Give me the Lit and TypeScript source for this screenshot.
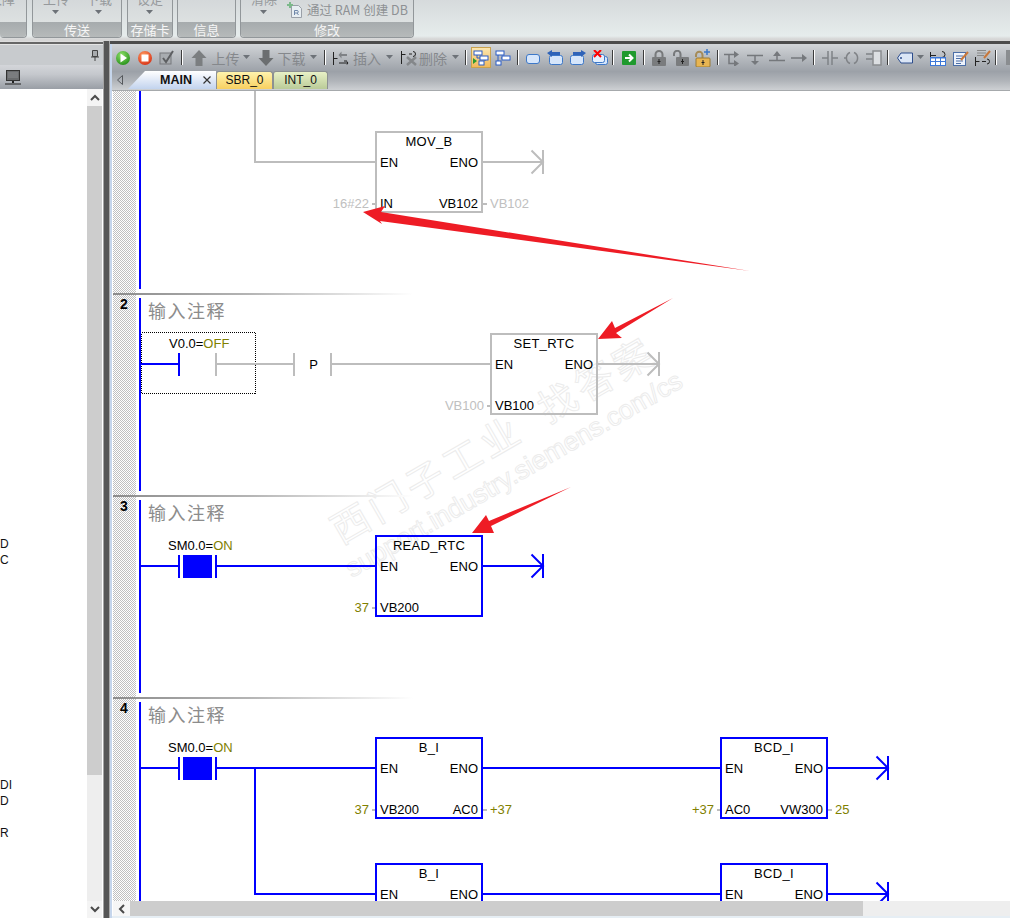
import { LitElement, html, css, svg } from "lit";
import { customElement } from "lit/decorators.js";

const BLUE = "#0000ff";
const GRAY = "#bdbdbd";
const OLIVE = "#808000";
const LABEL = "#c0c0c0";

const ico = (w: number, h: number, body: unknown) =>
  html`<svg width=${w} height=${h} viewBox="0 0 ${w} ${h}">${body}</svg>`;

const caretIcon = ico(8, 5, svg`<path d="M0 0h7L3.5 4z" fill="#6d7278"/>`);

const contactGlyph = svg`<g stroke="#222" stroke-width="1" fill="none"><path d="M0.5 2v7M6 5.500h-5M0.500 13v-1h4M12 1.500a2 2 0 0 1 0 6"/></g>`;

type Item = { w: number; c?: unknown; cls?: string };

const items: Item[] = [
  { w: 22, c: ico(16, 16, svg`<defs><radialGradient id="gg" cx=".4" cy=".3" r=".8"><stop offset="0" stop-color="#8fe06a"/><stop offset="1" stop-color="#1d8a12"/></radialGradient></defs><circle cx="8" cy="8" r="7" fill="url(#gg)"/><path d="M5.500 3.500l6.500 4.500-6.500 4.500z" fill="#fff"/>`) },
  { w: 22, c: ico(16, 16, svg`<defs><radialGradient id="rg" cx=".4" cy=".3" r=".8"><stop offset="0" stop-color="#ff9a60"/><stop offset="1" stop-color="#d52a10"/></radialGradient></defs><circle cx="8" cy="8" r="7" fill="url(#rg)"/><rect x="4.500" y="4.500" width="7" height="7" fill="#fff"/>`) },
  { w: 21, c: ico(16, 16, svg`<rect x="1" y="3" width="11" height="11" fill="#a8acb0" stroke="#77797c"/><path d="M4 8l3 4 7-11" fill="none" stroke="#5d5f62" stroke-width="2"/>`) },
  { w: 10, cls: "sep" },
  { w: 24, c: ico(16, 16, svg`<path d="M8 0l7.500 8H11.500v8H4.500V8H.5z" fill="#7b7e80"/>`) },
  { w: 29, c: "上传", cls: "tx" },
  { w: 14, c: caretIcon },
  { w: 23, c: ico(16, 16, svg`<path d="M8 16l7.500-8H11.500V0H4.500v8H.5z" fill="#6b6e70"/>`) },
  { w: 29, c: "下载", cls: "tx" },
  { w: 15, c: caretIcon },
  { w: 8, cls: "sep" },
  { w: 24, c: ico(16, 16, svg`<g fill="none" stroke="#222"><path d="M.5 2v13M.5 8.500h4M6 13h9M11 11h3M14 11.500a2 2 0 0 1 0 3"/></g><path d="M14 4H8.500V1.500L5.500 5l3 3.500V6H14z" fill="#7f8286"/>`) },
  { w: 28, c: "插入", cls: "tx" },
  { w: 18, c: caretIcon },
  { w: 19, c: ico(16, 16, svg`<g fill="none" stroke="#222"><path d="M.5 1v13M.5 4.500h4M8 4h3M12 1.500a2 2 0 0 1 0 5"/></g><path d="M6 7l9 8M15 7l-9 8" stroke="#84878a" stroke-width="2.500"/>`) },
  { w: 30, c: "删除", cls: "tx" },
  { w: 15, c: caretIcon },
  { w: 5, cls: "sep" },
  { w: 25, cls: "active", c: ico(16, 16, svg`<rect x="1" y="1" width="8" height="4" fill="#fff" stroke="#2a5cc6"/><rect x="7" y="6" width="8" height="4" fill="#fff" stroke="#2a5cc6"/><rect x="6" y="11" width="5" height="4" fill="#fff" stroke="#2a5cc6"/><path d="M0 8l4 3-4 3z" fill="#2a9a30"/><path d="M4 5v3h3M12 10v1" stroke="#2a5cc6" fill="none"/>`) },
  { w: 20, c: ico(16, 16, svg`<rect x="1" y="1" width="8" height="4" fill="#fff" stroke="#2a5cc6"/><rect x="7" y="6" width="8" height="4" fill="#fff" stroke="#2a5cc6"/><rect x="1" y="11" width="5" height="4" fill="#fff" stroke="#2a5cc6"/><path d="M3 5v6M6 8h1" stroke="#2a5cc6" fill="none"/>`) },
  { w: 10, cls: "sep" },
  { w: 20, c: ico(16, 16, svg`<rect x="1.500" y="4.500" width="13" height="9" rx="2.500" fill="#d6e6fb" stroke="#3d78c8"/>`) },
  { w: 23, c: ico(16, 16, svg`<rect x="2.500" y="5.500" width="13" height="9" rx="2" fill="#d6e6fb" stroke="#3d78c8"/><path d="M0 3l5-3v2h8v3H5v2z" fill="#2f63b8"/>`) },
  { w: 23, c: ico(16, 16, svg`<rect x=".5" y="5.500" width="13" height="9" rx="2" fill="#d6e6fb" stroke="#3d78c8"/><path d="M16 3l-5-3v2H3v3h8v2z" fill="#2f63b8"/>`) },
  { w: 21, c: ico(16, 16, svg`<rect x="3.500" y="6.500" width="12" height="8" rx="2" fill="#d6e6fb" stroke="#3d78c8"/><rect x=".5" y="4.500" width="12" height="8" rx="2" fill="#e6f0fd" stroke="#3d78c8"/><path d="M2 0l7 7M9 0L2 7" stroke="#f00" stroke-width="2"/>`) },
  { w: 6, cls: "sep" },
  { w: 26, c: ico(14, 14, svg`<rect width="14" height="14" rx="1" fill="#1f9a2e"/><path d="M3 7h7M7 3.500L10.500 7 7 10.500" fill="none" stroke="#fff" stroke-width="2"/>`) },
  { w: 4, cls: "sep" },
  { w: 26, c: ico(14, 16, svg`<path d="M3.500 7V4.500a3.500 3.500 0 0 1 7 0V7" fill="none" stroke="#77797b" stroke-width="2"/><rect y="7" width="14" height="9" rx="1" fill="#7a7c7e"/><path d="M7 9v5M5.500 11.500h3" stroke="#222"/>`) },
  { w: 18, c: ico(16, 16, svg`<path d="M1 6V4a3.200 3.200 0 0 1 6.500 0v3" fill="none" stroke="#77797b" stroke-width="2"/><rect x="3" y="7" width="13" height="9" rx="1" fill="#7a7c7e"/><path d="M9.500 9v5M8 11.500h3" stroke="#222"/>`) },
  { w: 26, c: ico(16, 18, svg`<path d="M1 8V6a3.200 3.200 0 0 1 6.500 0v3" fill="none" stroke="#a58b58" stroke-width="2"/><rect x="1" y="9" width="14" height="9" rx="1" fill="#e8b552" stroke="#9a7a35"/><path d="M8 11v5M6.500 13.500h3" stroke="#222"/><path d="M12 0v6M9 3h6" stroke="#3d78c8" stroke-width="1.500"/>`) },
  { w: 4, cls: "sep" },
  { w: 24, c: ico(16, 16, svg`<path d="M0 4.500h5v9h8M5 4.500h7" fill="none" stroke="#75787c" stroke-width="1.500"/><path d="M10 1l5 3.500-5 3.500zM10 10l5 3.500-5 3.500z" fill="#75787c"/>`) },
  { w: 21, c: ico(16, 16, svg`<path d="M0 5.500h16M8 6v5" stroke="#75787c" stroke-width="1.500"/><path d="M4 11h8l-4 4z" fill="#75787c"/>`) },
  { w: 23, c: ico(16, 16, svg`<path d="M0 10.500h16M8 10V5" stroke="#75787c" stroke-width="1.500"/><path d="M4 6h8L8 1z" fill="#75787c"/>`) },
  { w: 22, c: ico(16, 16, svg`<path d="M0 8h12" stroke="#75787c" stroke-width="1.500"/><path d="M11 4l5 4-5 4z" fill="#75787c"/>`) },
  { w: 8, cls: "sep" },
  { w: 23, c: ico(16, 16, svg`<path d="M0 8h6M6 1v14M10 1v14M10 8h6" stroke="#7f8286" stroke-width="1.500" fill="none"/>`) },
  { w: 22, c: ico(16, 16, svg`<path d="M0 8h3M6 2.500a6 6 0 0 0 0 11M10 2.500a6 6 0 0 1 0 11" stroke="#7f8286" stroke-width="1.500" fill="none"/>`) },
  { w: 21, c: ico(16, 16, svg`<path d="M0 4h7M0 9h7" stroke="#7f8286" stroke-width="1.500"/><rect x="7" y="1" width="8" height="14" fill="#dcdfe2" stroke="#8a8d90" stroke-width="1.500"/>`) },
  { w: 8, cls: "sep" },
  { w: 25, c: ico(16, 12, svg`<path d="M.5 6L4 1h11.500v10H4z" fill="#dbe6f6" stroke="#2d4d8c"/><circle cx="4" cy="6" r="1" fill="#2d4d8c"/>`) },
  { w: 8, c: caretIcon },
  { w: 25, c: ico(16, 16, svg`${contactGlyph}<rect x="0.500" y="7.500" width="15" height="8" fill="#fff" stroke="#3d78d8"/><path d="M0 11.500h16M5.500 8v8M10.500 8v8" stroke="#3d78d8"/><rect x="0" y="7" width="16" height="1.500" fill="#3d78d8"/>`) },
  { w: 21, c: ico(16, 16, svg`<rect x=".5" y="2.500" width="12" height="13" fill="#eef3fb" stroke="#4c6fa8"/><path d="M3 6h7M3 8.500h7M3 11h7M3 13.500h5" stroke="#4c6fa8"/><path d="M8 10l7-8" stroke="#c8773a" stroke-width="2"/>`) },
  { w: 23, c: ico(16, 16, svg`<path d="M2 .5h9M2 3h9M2 5.500h7" stroke="#888"/><path d="M9 8l6-7" stroke="#c8773a" stroke-width="2"/><g stroke="#222" fill="none"><path d="M.5 7v9M.5 11.500h4M7 11.500h4M12 9a2.500 2.500 0 0 1 0 5"/></g>`) },
  { w: 4, cls: "sep" },
  { w: 14, c: html`<span class="stub"></span>` },
];

const wire = (pts: string, c: string) =>
  svg`<polyline points=${pts} fill="none" stroke=${c} stroke-width="2"/>`;

const chevron = (x: number, y: number, c: string) => svg`
  <path d="M${x} ${y - 12}V${y + 12}M${x - 11.500} ${y - 11.500}L${x} ${y}L${x - 11.500} ${y + 11.500}" fill="none" stroke=${c} stroke-width="2" style="shape-rendering:auto"/>`;

const label = (x: number, y: number, t: string, fill = "#000", anchor = "start") =>
  svg`<text x=${x} y=${y} fill=${fill} text-anchor=${anchor}>${t}</text>`;

type Box = {
  x: number; y: number; title: string; c: string; a?: string; ac?: string; inl?: string; out?: string; b?: string; bc?: string;
};

const box = ({ x, y, title, c, a, ac, inl, out, b, bc }: Box) => svg`
  <rect x=${x} y=${y} width="106" height="80" fill="#fff" fill-opacity="0" stroke=${c} stroke-width="2"/>
  <text class="ttl" x=${x + 53} y=${y + 14} text-anchor="middle">${title}</text>
  ${label(x + 4, y + 35, "EN")}
  ${label(x + 102, y + 35, "ENO", "#000", "end")}
  ${inl ? label(x + 4, y + 76, inl) : null}
  ${out ? label(x + 102, y + 76, out, "#000", "end") : null}
  ${a ? svg`<path d="M${x - 4} ${y + 72}h3" stroke=${GRAY} stroke-width="2"/>${label(x - 7, y + 76, a, ac, "end")}` : null}
  ${b ? svg`<path d="M${x + 107} ${y + 72}h4" stroke=${GRAY} stroke-width="2"/>${label(x + 114, y + 76, b, bc)}` : null}
`;

const netHead = (y: number, n: string) => svg`
  <rect x="113" y=${y} width="300" height="2" fill="url(#sepg)"/>
  <text class="num" x="124" y=${y + 16} text-anchor="middle">${n}</text>
  <text class="cmt" x="148" y=${y + 25}>输入注释</text>
`;

const onContact = (y: number) => svg`
  <text x="168" y=${y - 16}>SM0.0=<tspan fill=${OLIVE}>ON</tspan></text>
  <path d="M141 ${y}H178" stroke=${BLUE} stroke-width="2"/>
  <rect x="178" y=${y - 11} width="2" height="23" fill=${BLUE}/>
  <rect x="183" y=${y - 11} width="29" height="23" fill=${BLUE}/>
  <rect x="215" y=${y - 11} width="2" height="23" fill=${BLUE}/>
`;

const arrow = (p: string) => svg`<polygon points=${p} fill="#ee1c25" style="shape-rendering:auto"/>`;

const ladder = svg`
  <defs>
    <pattern id="chk" x="0" y="0" width="2" height="2" patternUnits="userSpaceOnUse">
      <rect width="2" height="2" fill="#fff"/><rect width="1" height="1" fill="#c0c0c0"/><rect x="1" y="1" width="1" height="1" fill="#c0c0c0"/>
    </pattern>
    <linearGradient id="sepg"><stop offset="0" stop-color="#8c8c8c"/><stop offset=".45" stop-color="#b4b4b4"/><stop offset="1" stop-color="#fff"/></linearGradient>
  </defs>
  <rect x="113" y="91" width="23" height="810" fill="url(#chk)"/>

  <g class="wm">
    <text class="wm1" transform="translate(341 545) rotate(-30)">西门子工业</text>
    <text class="wm1" transform="translate(548 424) rotate(-30)">找答案</text>
    <text class="wm2" transform="translate(352 578) rotate(-30)">support.industry.siemens.com/cs</text>
  </g>

  <rect x="139" y="91" width="2" height="198" fill=${BLUE}/>
  <rect x="139" y="298" width="2" height="193" fill=${BLUE}/>
  <rect x="139" y="500" width="2" height="193" fill=${BLUE}/>
  <rect x="139" y="702" width="2" height="199" fill=${BLUE}/>

  ${wire("255,91 255,162 376,162", GRAY)}
  ${box({ x: 376, y: 132, title: "MOV_B", c: GRAY, a: "16#22", ac: LABEL, inl: "IN", out: "VB102", b: "VB102", bc: LABEL })}
  ${wire("482,162 543,162", GRAY)}${chevron(543, 162, GRAY)}

  ${netHead(293, "2")}
  <rect class="dot" x="141.500" y="332.500" width="114" height="61"/>
  <text x="169" y="348">V0.0=<tspan fill=${OLIVE}>OFF</tspan></text>
  <path d="M141 364H178" stroke=${BLUE} stroke-width="2"/>
  <rect x="178" y="353" width="2" height="23" fill=${BLUE}/>
  <rect x="215" y="353" width="2" height="23" fill=${GRAY}/>
  <path d="M217 364H293" stroke=${GRAY} stroke-width="2"/>
  <rect x="293" y="353" width="2" height="23" fill=${GRAY}/>
  ${label(313.500, 369, "P", "#000", "middle")}
  <rect x="330" y="353" width="2" height="23" fill=${GRAY}/>
  <path d="M332 364H491" stroke=${GRAY} stroke-width="2"/>
  ${box({ x: 491, y: 334, title: "SET_RTC", c: GRAY, a: "VB100", ac: LABEL, inl: "VB100" })}
  ${wire("597,364 659,364", GRAY)}${chevron(659, 364, GRAY)}

  ${netHead(495, "3")}
  ${onContact(566)}
  <path d="M217 566H376" stroke=${BLUE} stroke-width="2"/>
  ${box({ x: 376, y: 536, title: "READ_RTC", c: BLUE, a: "37", ac: OLIVE, inl: "VB200" })}
  ${wire("482,566 543,566", BLUE)}${chevron(543, 566, BLUE)}

  ${netHead(697, "4")}
  ${onContact(768)}
  <path d="M217 768H376" stroke=${BLUE} stroke-width="2"/>
  ${wire("255,768 255,894 376,894", BLUE)}
  ${box({ x: 376, y: 738, title: "B_I", c: BLUE, a: "37", ac: OLIVE, inl: "VB200", out: "AC0", b: "+37", bc: OLIVE })}
  ${wire("482,768 721,768", BLUE)}
  ${box({ x: 721, y: 738, title: "BCD_I", c: BLUE, a: "+37", ac: OLIVE, inl: "AC0", out: "VW300", b: "25", bc: OLIVE })}
  ${wire("827,768 888,768", BLUE)}${chevron(888, 768, BLUE)}
  ${box({ x: 376, y: 864, title: "B_I", c: BLUE })}
  ${wire("482,894 721,894", BLUE)}
  ${box({ x: 721, y: 864, title: "BCD_I", c: BLUE })}
  ${wire("827,894 888,894", BLUE)}${chevron(888, 894, BLUE)}

  ${arrow("363,212 385,206 381,212 750,271 380,221 382,224")}
  ${arrow("598,339 612,321 615,328 673,298 616,333 622,338")}
  ${arrow("472,533 486,515 489,521 571,487 491,526 494,533")}
`;

const chevUp = ico(10, 7, svg`<path d="M1 6l4-4 4 4" fill="none" stroke="#4a4a4a" stroke-width="2"/>`);
const chevDown = ico(10, 7, svg`<path d="M1 1l4 4 4-4" fill="none" stroke="#4a4a4a" stroke-width="2"/>`);
const chevLeft = ico(7, 10, svg`<path d="M6 1L2 5l4 4" fill="none" stroke="#4a4a4a" stroke-width="2"/>`);

@customElement("app-root")
export class AppRoot extends LitElement {
  static styles = css`
    :host {
      display: block;
      width: 1010px;
      height: 918px;
      overflow: hidden;
      background: #e4e8e8;
      font-family: "Noto Sans CJK SC", "Liberation Sans", sans-serif;
    }
    .ribbon {
      height: 41px;
      display: flex;
      gap: 5px;
      overflow: hidden;
      background: linear-gradient(#d6dadc, #e6ecec 36px, #d6d6d6 39px);
    }
    .grp {
      height: 38px;
      display: flex;
      flex-direction: column;
      border: solid #92979a;
      border-width: 0 1px 1px 1px;
      border-radius: 0 0 4px 4px;
      box-sizing: border-box;
      overflow: hidden;
      flex: none;
    }
    .g0 { width: 27px; border-left: 0; }
    .g1 { width: 90px; }
    .g2 { width: 46px; }
    .g3 { width: 59px; margin-left: -1px; }
    .g4 { width: 174px; margin-left: -1px; }
    .grp-body {
      height: 23px;
      display: flex;
      align-items: flex-end;
      background: linear-gradient(#d4d8da, #dde1e1);
      overflow: hidden;
    }
    .g0 .grp-body { padding-left: 0; }
    .g0 .rit { margin-left: -11px; }
    .g1 .grp-body { gap: 17px; padding-left: 10px; }
    .g2 .grp-body { justify-content: center; }
    .g4 .grp-body { padding-left: 10px; }
    .rit {
      display: flex;
      flex-direction: column;
      align-items: center;
      gap: 4px;
      padding-bottom: 7px;
      color: #96999c;
      font-size: 13px;
      line-height: 15px;
      flex: none;
    }
    .rit svg { display: block; }
    .blank { display: block; height: 5px; }
    .rit-side {
      display: flex;
      align-items: center;
      gap: 5px;
      margin-left: 10px;
      padding-bottom: 4px;
      color: #8e9194;
      font-size: 12.500px;
      line-height: 16px;
      flex: none;
    }
    .rit-side svg { display: block; }
    .grp-label {
      height: 15px;
      line-height: 15px;
      text-align: center;
      color: #f6f6f6;
      font-size: 13px;
      background: linear-gradient(#a6abad, #b6baba);
    }

    .body {
      display: flex;
      height: 877px;
    }
    .left {
      width: 104px;
      flex: none;
      display: flex;
      flex-direction: column;
      box-sizing: border-box;
      border-right: 1px solid #a4a4a4;
      background: #fff;
    }
    .left-line {
      height: 4px;
      box-sizing: border-box;
      border-top: 1px solid #dcdcdc;
      border-bottom: 1px solid #e4e4e4;
      background: #666;
    }
    .left-title {
      height: 20px;
      background: #c8cbce;
      display: flex;
      align-items: center;
      justify-content: flex-end;
      padding-right: 4px;
      box-sizing: border-box;
    }
    .left-tools {
      height: 24px;
      background: linear-gradient(#d4d6da, #c4c7cc 40%, #999ea5);
      display: flex;
      align-items: center;
      padding-left: 5px;
    }
    .left-list {
      flex: 1;
      display: flex;
      min-height: 0;
      padding-right: 1px;
    }
    .names {
      flex: 1;
      min-width: 0;
      overflow: hidden;
      padding-top: 447px;
      font: 12px/16px "Liberation Sans", sans-serif;
      color: #111;
    }
    .gap-a { margin-top: 209px; }
    .gap-b { margin-top: 16px; }
    .vscroll {
      width: 15px;
      flex: none;
      display: flex;
      flex-direction: column;
      background: #eee;
    }
    .btn-v {
      height: 17px;
      display: flex;
      align-items: center;
      justify-content: center;
      background: #f4f4f4;
      flex: none;
    }
    .vthumb { height: 669px; background: #cdcdcd; flex: none; }
    .vtrack { flex: 1; }
    .splitter {
      width: 6px;
      flex: none;
      box-sizing: border-box;
      background: #565656;
      border-right: 1px solid #a8a8a8;
    }
    .editor {
      flex: 1;
      min-width: 0;
      display: flex;
      flex-direction: column;
      border-left: 2px solid #c6d6ec;
      background: #fff;
    }
    .editor-line { height: 4px; background: #4c4c4c; margin-left: -2px; }
    .bars {
      height: 46px;
      flex: none;
      background: linear-gradient(#d2d5d8, #b6babf 30%, #9ca1a8 60%, #b0b4b9 80%, #cdd0d3);
      border-bottom: 1px solid #a6a9ac;
      display: flex;
      flex-direction: column;
      overflow: hidden;
    }
    .tools { height: 27px; display: flex; flex: none; }
    .ti {
      display: flex;
      align-items: center;
      justify-content: center;
      flex: none;
      height: 27px;
      box-sizing: border-box;
    }
    .ti svg { display: block; }
    .ti.tx { font-size: 14px; color: #85888c; }
    .ti.sep::before {
      content: "";
      width: 1px;
      height: 15px;
      background: #3c3c3c;
      border-right: 1px solid #fff;
    }
    .ti.active {
      position: relative;
      z-index: 0;
    }
    .ti.active::before {
      content: "";
      position: absolute;
      inset: 3px 2px 3px 3px;
      z-index: -1;
      background: linear-gradient(#fbe6b0, #f2b95a);
      border: 1px solid #c9a24e;
    }
    .stub {
      width: 6px;
      height: 15px;
      margin-left: 8px;
      background: #8a8d90;
    }
    .tabs {
      height: 18px;
      display: flex;
      align-items: flex-end;
      flex: none;
      font: 12px/17px "Liberation Sans", sans-serif;
      color: #111;
    }
    .back {
      width: 16px;
      height: 18px;
      display: flex;
      align-items: center;
      justify-content: center;
      flex: none;
    }
    .tab-main {
      width: 88px;
      height: 18px;
      box-sizing: border-box;
      flex: none;
      display: flex;
      align-items: center;
      padding-left: 32px;
      gap: 11px;
      font-weight: 700;
      font-size: 12.500px;
      background: linear-gradient(#fff, #c2d3ee);
      clip-path: polygon(0 100%, 17px 0, 100% 0, 100% 100%);
    }
    .tab {
      height: 18px;
      box-sizing: border-box;
      flex: none;
      text-align: center;
      border: 1px solid #8d9192;
      border-bottom: 0;
      border-radius: 3px 3px 0 0;
    }
    .sbr { width: 57px; background: linear-gradient(#fff3ad, #f8d060); }
    .int { width: 55px; margin-left: 0; background: linear-gradient(#e8f1c6, #bacb98); }
    .canvas { height: 810px; flex: none; overflow: hidden; }
    .canvas svg {
      display: block;
      shape-rendering: crispEdges;
      font: 13px "Liberation Sans", sans-serif;
    }
    .canvas .ttl { letter-spacing: 0.300px; }
    .canvas .num { font: 700 14px "Liberation Sans", sans-serif; fill: #000; }
    .canvas .cmt {
      font: 18px "Noto Sans CJK SC", sans-serif;
      letter-spacing: 1.500px;
      fill: #8c8c8c;
    }
    .canvas .dot {
      fill: none;
      stroke: #000;
      stroke-width: 1;
      stroke-dasharray: 1 1;
    }
    .canvas .wm text {
      fill: #fff;
      stroke: #ececec;
      stroke-width: 1;
      shape-rendering: auto;
    }
    .canvas .wm1 { font: 38px "Noto Sans CJK SC", sans-serif; letter-spacing: 5px; }
    .canvas .wm2 { font: 26.500px "Liberation Sans", sans-serif; }
    .hscroll {
      height: 15px;
      flex: none;
      display: flex;
      margin-left: 1px;
      background: #eee;
    }
    .btn-h {
      width: 17px;
      display: flex;
      align-items: center;
      justify-content: center;
      background: #f6f6f6;
      flex: none;
    }
    .hthumb { width: 733px; background: #cdcdcd; flex: none; }
    .foot { height: 2px; background: #e6eef4; flex: none; }
  `;

  render() {
    return html`
      <div class="ribbon">
        <div class="grp g0">
          <div class="grp-body"><div class="rit"><span>故障</span><span class="blank"></span></div></div>
          <div class="grp-label"></div>
        </div>
        <div class="grp g1">
          <div class="grp-body">
            <div class="rit"><span>上传</span>${caretIcon}</div>
            <div class="rit"><span>下载</span>${caretIcon}</div>
          </div>
          <div class="grp-label">传送</div>
        </div>
        <div class="grp g2">
          <div class="grp-body"><div class="rit"><span>设定</span>${caretIcon}</div></div>
          <div class="grp-label">存储卡</div>
        </div>
        <div class="grp g3">
          <div class="grp-body"></div>
          <div class="grp-label">信息</div>
        </div>
        <div class="grp g4">
          <div class="grp-body">
            <div class="rit"><span>清除</span>${caretIcon}</div>
            <div class="rit-side">
              ${ico(15, 16, svg`<path d="M4.500 3.500h7l3 3v9h-10z" fill="#e8eef2" stroke="#9aa0a8"/><path d="M3 0v6M0 3h6" stroke="#7cb98a" stroke-width="2"/><path d="M7.500 13V8.500h2.500a1.200 1.200 0 0 1 0 2.500H7.500M10 11l1.500 2" fill="none" stroke="#6f87a8"/>`)}
              <span>通过 RAM 创建 DB</span>
            </div>
          </div>
          <div class="grp-label">修改</div>
        </div>
      </div>

      <div class="body">
        <div class="left">
          <div class="left-line"></div>
          <div class="left-title">
            ${ico(8, 11, svg`<path d="M1.500.5h5v6h-5zM0 7h8M4 7v4" fill="#a8abae" stroke="#444"/>`)}
          </div>
          <div class="left-tools">
            ${ico(16, 15, svg`<rect x="1.500" y=".5" width="13" height="10" fill="#6a6c6e" stroke="#333"/><path d="M3 3h10M3 5h10M3 7h10" stroke="#8b8d90"/><path d="M8 11v2" stroke="#222" stroke-width="2"/><path d="M0 14h16" stroke="#222"/>`)}
          </div>
          <div class="left-list">
            <div class="names">
              <div>D</div>
              <div>C</div>
              <div class="gap-a">DI</div>
              <div>D</div>
              <div class="gap-b">R</div>
            </div>
            <div class="vscroll">
              <div class="btn-v">${chevUp}</div>
              <div class="vthumb"></div>
              <div class="vtrack"></div>
              <div class="btn-v">${chevDown}</div>
            </div>
          </div>
        </div>
        <div class="splitter"></div>
        <div class="editor">
          <div class="editor-line"></div>
          <div class="bars">
            <div class="tools">
              ${items.map(
                (i) => html`<div class="ti ${i.cls ?? ""}" style="width:${i.w}px">${i.c ?? ""}</div>`
              )}
            </div>
            <div class="tabs">
              <div class="back">
                ${ico(6, 10, svg`<path d="M5.500 .5L.5 5l5 4.500z" fill="none" stroke="#55585c"/>`)}
              </div>
              <div class="tab-main">
                <span>MAIN</span>
                ${ico(8, 8, svg`<path d="M.5 .5l7 7M7.500 .5l-7 7" stroke="#333" stroke-width="1.200"/>`)}
              </div>
              <div class="tab sbr">SBR_0</div>
              <div class="tab int">INT_0</div>
            </div>
          </div>
          <div class="canvas">
            <svg width="898" height="810" viewBox="112 91 898 810">${ladder}</svg>
          </div>
          <div class="hscroll">
            <div class="btn-h">${chevLeft}</div>
            <div class="hthumb"></div>
          </div>
          <div class="foot"></div>
        </div>
      </div>
    `;
  }
}
